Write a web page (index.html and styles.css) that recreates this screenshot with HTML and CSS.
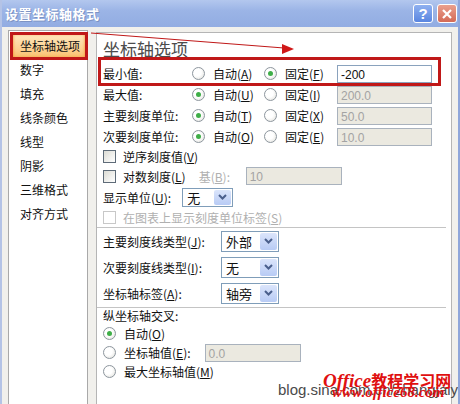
FILE: index.html
```html
<!DOCTYPE html>
<html lang="zh-CN">
<head>
    <meta charset="UTF-8">
    <title>设置坐标轴格式</title>
    <link rel="stylesheet" href="styles.css">
</head>
<body>

<div class="window">
    <div class="titlebar">
        <span class="title">设置坐标轴格式</span>
        <div class="title-buttons">
            <span class="tbtn help">?</span>
            <span class="tbtn close">
                <svg width="12" height="12" viewBox="0 0 12 12"><path d="M2 2 L10 10 M10 2 L2 10" stroke="#fff" stroke-width="2.2"/></svg>
            </span>
        </div>
    </div>

    <div class="dialog">
        <!-- lista kategorii -->
        <ul class="nav">
            <li class="active">坐标轴选项</li>
            <li>数字</li>
            <li>填充</li>
            <li>线条颜色</li>
            <li>线型</li>
            <li>阴影</li>
            <li>三维格式</li>
            <li>对齐方式</li>
        </ul>

        <div class="panel">
            <h2 class="heading">坐标轴选项</h2>

            <div class="axis-row">
                <span>最小值:</span>
                <label class="opt"><span class="radio"></span>自动(<u>A</u>)</label>
                <label class="opt"><span class="radio on"></span>固定(<u>F</u>)</label>
                <span class="field">-200</span>
            </div>
            <div class="axis-row">
                <span>最大值:</span>
                <label class="opt"><span class="radio on"></span>自动(<u>U</u>)</label>
                <label class="opt"><span class="radio"></span>固定(<u>I</u>)</label>
                <span class="field off">200.0</span>
            </div>
            <div class="axis-row">
                <span>主要刻度单位:</span>
                <label class="opt"><span class="radio on"></span>自动(<u>T</u>)</label>
                <label class="opt"><span class="radio"></span>固定(<u>X</u>)</label>
                <span class="field off">50.0</span>
            </div>
            <div class="axis-row">
                <span>次要刻度单位:</span>
                <label class="opt"><span class="radio on"></span>自动(<u>O</u>)</label>
                <label class="opt"><span class="radio"></span>固定(<u>E</u>)</label>
                <span class="field off">10.0</span>
            </div>

            <div class="line-row h19">
                <label class="opt"><span class="check"></span>逆序刻度值(<u>V</u>)</label>
            </div>
            <div class="line-row h20">
                <label class="opt"><span class="check"></span>对数刻度(<u>L</u>)</label>
                <span class="base-label">基(<u>B</u>):</span>
                <span class="field off base-field">10</span>
            </div>
            <div class="line-row h22">
                <span>显示单位(<u>U</u>):</span>
                <span class="combo small"><span class="combo-text">无</span><span class="combo-btn"><svg width="9" height="6" viewBox="0 0 9 6"><path d="M1 1 L4.5 4.5 L8 1" fill="none" stroke="#4a5f8c" stroke-width="2"/></svg></span></span>
            </div>
            <div class="line-row h19 disabled">
                <label class="opt"><span class="check dim"></span>在图表上显示刻度单位标签(<u>S</u>)</label>
            </div>

            <div class="sep"></div>

            <div class="combo-row">
                <span class="combo-label">主要刻度线类型(<u>J</u>):</span>
                <span class="combo"><span class="combo-text">外部</span><span class="combo-btn"><svg width="9" height="6" viewBox="0 0 9 6"><path d="M1 1 L4.5 4.5 L8 1" fill="none" stroke="#4a5f8c" stroke-width="2"/></svg></span></span>
            </div>
            <div class="combo-row">
                <span class="combo-label">次要刻度线类型(<u>I</u>):</span>
                <span class="combo"><span class="combo-text">无</span><span class="combo-btn"><svg width="9" height="6" viewBox="0 0 9 6"><path d="M1 1 L4.5 4.5 L8 1" fill="none" stroke="#4a5f8c" stroke-width="2"/></svg></span></span>
            </div>
            <div class="combo-row">
                <span class="combo-label">坐标轴标签(<u>A</u>):</span>
                <span class="combo"><span class="combo-text">轴旁</span><span class="combo-btn"><svg width="9" height="6" viewBox="0 0 9 6"><path d="M1 1 L4.5 4.5 L8 1" fill="none" stroke="#4a5f8c" stroke-width="2"/></svg></span></span>
            </div>

            <div class="sep"></div>

            <div class="cross-title">纵坐标轴交叉:</div>
            <div class="cross-row">
                <label class="opt"><span class="radio on"></span>自动(<u>O</u>)</label>
            </div>
            <div class="cross-row">
                <label class="opt"><span class="radio"></span>坐标轴值(<u>E</u>):</label>
                <span class="field off cross-field">0.0</span>
            </div>
            <div class="cross-row">
                <label class="opt"><span class="radio"></span>最大坐标轴值(<u>M</u>)</label>
            </div>
        </div>
    </div>

    <!-- adnotacje na zrzucie -->
    <svg class="annot" width="460" height="404" viewBox="0 0 460 404">
        <rect x="11.5" y="33.5" width="75" height="25" fill="none" stroke="#c01818" stroke-width="3"/>
        <rect x="99.5" y="58.5" width="340" height="26" fill="none" stroke="#c01818" stroke-width="3"/>
        <line x1="91" y1="33" x2="284" y2="48" stroke="#c01818" stroke-width="1"/>
        <polygon points="282,44 294,49 282,54" fill="#d01818"/>
    </svg>

    <div class="watermark">
        <span class="wm-blog">blog.sina.com.cn/zhangjaiyi</span>
        <span class="wm-office"><i>Office</i>教程学习网</span>
        <span class="wm-url">www.office68.com</span>
    </div>
</div>

</body>
</html>
```

FILE: styles.css
```css
body {
    margin: 0;
    padding: 0;
    font-family: "Noto Sans CJK SC", "Liberation Sans", sans-serif;
    font-size: 12px;
    color: #111;
}

.window {
    position: relative;
    width: 460px;
    height: 404px;
    overflow: hidden;
    background-color: #f1f0ec;
    box-sizing: border-box;
    border-left: 2px solid #b4c3e6;
    border-right: 2px solid #8fa6da;
}

.titlebar {
    height: 27px;
    margin: 0 -2px;
    padding: 0 3px 0 5px;
    display: flex;
    align-items: center;
    justify-content: space-between;
    background: linear-gradient(#b3c7ee, #9bb4e6 40%, #92ace2);
}

.title {
    color: #fff;
    font-size: 13px;
    font-weight: bold;
    letter-spacing: 0.5px;
    text-shadow: 1px 1px 0 #7d93c4;
}

.title-buttons {
    display: flex;
    gap: 4px;
}

.tbtn {
    width: 20px;
    height: 19px;
    border: 1px solid #fff;
    border-radius: 3px;
    display: flex;
    align-items: center;
    justify-content: center;
    box-sizing: border-box;
}

.help {
    background: linear-gradient(#8fb0f0, #5a86e0);
    color: #fff;
    font-family: "Liberation Sans", sans-serif;
    font-weight: bold;
    font-size: 15px;
}

.close {
    background: linear-gradient(#eaa08e, #d46a56);
}

.dialog {
    display: flex;
    padding: 3px 6px 0 6px;
    height: 377px;
}

.nav {
    list-style: none;
    margin: 0;
    padding: 3px 0 0 0;
    width: 80px;
    background-color: #fff;
    border: 1px solid #a9a9a9;
    border-bottom: none;
    box-sizing: border-box;
}

.nav li {
    height: 24px;
    line-height: 24px;
    padding-left: 11px;
}

.nav li.active {
    margin: 0 2px 0 4px;
    padding-left: 7px;
    background: linear-gradient(#ffe7bd, #fdd394 60%, #f9be6a);
    box-shadow: inset 0 0 3px #f08a20;
}

.panel {
    flex: 1;
    margin: 2px 0 0 8px;
    padding-left: 6px;
    background-color: #fff;
    border: 1px solid #b5b5b5;
    border-bottom: none;
}

.heading {
    margin: 5px 0 3px 0;
    height: 22px;
    line-height: 22px;
    font-size: 17px;
    font-weight: normal;
    color: #4c4c4c;
}

.axis-row {
    display: grid;
    grid-template-columns: 89px 72px 73px 95px;
    height: 21px;
    align-items: center;
}

.opt {
    display: flex;
    align-items: center;
    white-space: nowrap;
}

u {
    text-decoration: underline;
    text-underline-offset: 1px;
}

.radio {
    width: 11px;
    height: 11px;
    border: 1px solid #8d969e;
    border-radius: 50%;
    background: radial-gradient(circle at 40% 40%, #fff 40%, #dcdcd6);
    margin-right: 8px;
    position: relative;
    flex-shrink: 0;
}

.radio.on::after {
    content: "";
    position: absolute;
    left: 3px;
    top: 3px;
    width: 5px;
    height: 5px;
    border-radius: 50%;
    background-color: #3fae48;
}

.check {
    width: 11px;
    height: 11px;
    border: 1px solid #5e6b78;
    background: linear-gradient(135deg, #dcdcd4, #fff);
    margin-right: 7px;
    flex-shrink: 0;
}

.check.dim {
    border-color: #c8c8c8;
    background: #fff;
}

.field {
    height: 18px;
    line-height: 18px;
    border: 1px solid #8aa2bd;
    padding-left: 3px;
    box-sizing: border-box;
    font-family: "Liberation Sans", sans-serif;
    background-color: #fff;
}

.field.off {
    background-color: #ebe9e0;
    border-color: #a9b2bd;
    color: #a3a3a3;
}

.line-row {
    display: flex;
    align-items: center;
}

.h19 { height: 19px; }
.h20 { height: 20px; }
.h22 { height: 22px; }

.disabled {
    color: #b0b0b0;
}

.base-label {
    margin-left: 13px;
    width: 47px;
    color: #b0b0b0;
}

.base-field {
    width: 96px;
}

.combo {
    display: flex;
    align-items: center;
    justify-content: space-between;
    width: 58px;
    height: 21px;
    border: 1px solid #7f9db9;
    box-sizing: border-box;
    padding: 1px;
    background-color: #fff;
}

.combo.small {
    width: 51px;
    height: 19px;
    margin-left: 11px;
}

.combo-text {
    padding-left: 3px;
    font-size: 13px;
}

.combo-btn {
    width: 17px;
    height: 100%;
    display: flex;
    align-items: center;
    justify-content: center;
    background: linear-gradient(#dbe5fb, #b8cbf5);
    border-radius: 2px;
}

.sep {
    height: 1px;
    margin-right: 5px;
    margin-left: -6px;
    background-color: #c4c4c4;
}

.combo-row {
    display: flex;
    align-items: center;
    height: 26px;
}

.combo-row:first-of-type {
    margin-top: 0;
}

.combo-label {
    width: 118px;
}

.combo-row + .sep {
    margin-top: 1px;
}

.cross-title {
    height: 16px;
    line-height: 16px;
}

.cross-row {
    display: flex;
    align-items: center;
    height: 19px;
}

.cross-field {
    width: 96px;
    margin-left: 14px;
}

.annot {
    position: absolute;
    left: -2px;
    top: 0;
    pointer-events: none;
}

.watermark {
    position: absolute;
    left: 274px;
    top: 366px;
    width: 190px;
    height: 38px;
}

.wm-blog {
    position: absolute;
    left: 2px;
    top: 15px;
    font-family: "Liberation Sans", sans-serif;
    font-size: 15px;
    color: #4a4a4a;
    white-space: nowrap;
}

.wm-office {
    position: absolute;
    left: 47px;
    top: 2px;
    color: #e01010;
    font-size: 16px;
    font-weight: bold;
    white-space: nowrap;
}

.wm-office i {
    font-family: "Liberation Serif", serif;
    font-size: 19px;
}

.wm-url {
    position: absolute;
    left: 56px;
    top: 18px;
    color: #e01010;
    font-family: "Liberation Serif", serif;
    font-style: italic;
    font-weight: bold;
    font-size: 15px;
    white-space: nowrap;
}
```
